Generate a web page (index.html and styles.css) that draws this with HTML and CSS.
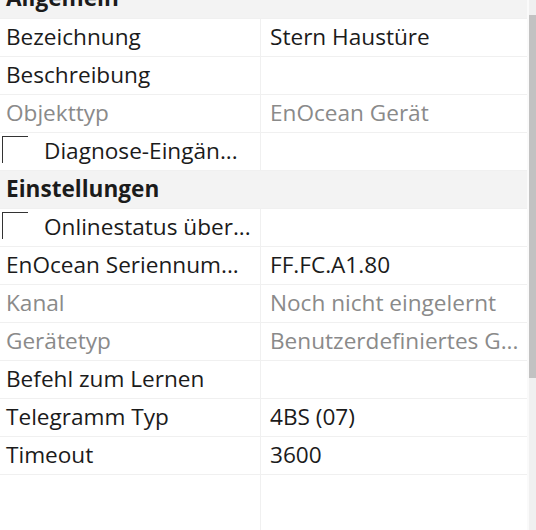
FILE: index.html
```html
<!DOCTYPE html>
<html lang="de">
<head>
<meta charset="utf-8">
<link rel="stylesheet" href="styles.css">
</head>
<body>
<div class="pane">
  <div class="grid">
    <div class="row cat first"><span class="cat-text">Allgemein</span></div>
    <div class="row"><div class="k">Bezeichnung</div><div class="v">Stern Haustüre</div></div>
    <div class="row"><div class="k">Beschreibung</div><div class="v"></div></div>
    <div class="row ro"><div class="k">Objekttyp</div><div class="v">EnOcean Gerät</div></div>
    <div class="row"><div class="k chk"><span class="box"></span><span>Diagnose-Eingän...</span></div><div class="v"></div></div>
    <div class="row cat"><span class="cat-text">Einstellungen</span></div>
    <div class="row"><div class="k chk"><span class="box"></span><span>Onlinestatus über...</span></div><div class="v"></div></div>
    <div class="row"><div class="k">EnOcean Seriennum...</div><div class="v">FF.FC.A1.80</div></div>
    <div class="row ro"><div class="k">Kanal</div><div class="v">Noch nicht eingelernt</div></div>
    <div class="row ro"><div class="k">Gerätetyp</div><div class="v">Benutzerdefiniertes G...</div></div>
    <div class="row"><div class="k">Befehl zum Lernen</div><div class="v"></div></div>
    <div class="row"><div class="k">Telegramm Typ</div><div class="v">4BS (07)</div></div>
    <div class="row"><div class="k">Timeout</div><div class="v">3600</div></div>
    <div class="filler"><div class="filler-k"></div></div>
  </div>
  <div class="scrollbar"><div class="thumb"></div></div>
</div>
</body>
</html>
```

FILE: styles.css
```css
html, body {
  margin: 0;
  padding: 0;
  background: #ffffff;
}
body {
  width: 536px;
  height: 530px;
  overflow: hidden;
  font-family: "Open Sans", "Noto Sans", sans-serif;
  font-size: 22.6px;
  color: #1b1b1b;
}
.pane {
  display: flex;
  height: 530px;
}
.grid {
  width: 527px;
  display: flex;
  flex-direction: column;
}
.row {
  height: 37px;
  flex: none;
  display: flex;
  border-bottom: 1px solid #f0f0f0;
}
.k {
  border-right: 1px solid #f0f0f0;
  padding-left: 6px;
  box-sizing: border-box;
  width: 261px;
  display: flex;
  align-items: center;
  white-space: nowrap;
  overflow: hidden;
  padding-bottom: 2px;
}
.v {
  flex: 1;
  padding-left: 9px;
  display: flex;
  align-items: center;
  white-space: nowrap;
  overflow: hidden;
  padding-bottom: 2px;
}
.ro .k, .ro .v {
  color: #8a8a8a;
}
.cat {
  background: #f3f3f3;
  align-items: center;
  padding-left: 6px;
  font-weight: bold;
}
.cat-text {
  padding-bottom: 2px;
}
.first {
  height: 18px;
  align-items: flex-end;
  overflow: hidden;
}
.first .cat-text {
  margin-bottom: 3px;
}
.chk {
  padding-left: 2px;
  align-items: flex-start;
}
.box {
  width: 26px;
  height: 27px;
  border-top: 1px solid #333333;
  border-left: 1px solid #333333;
  box-sizing: border-box;
  margin-top: 3px;
  flex: none;
}
.chk span + span {
  margin-left: 16px;
  align-self: center;
}
.filler {
  flex: 1;
  display: flex;
}
.filler-k {
  width: 261px;
  box-sizing: border-box;
  border-right: 1px solid #f0f0f0;
}
.scrollbar {
  width: 9px;
  background: #f0f0f0;
  border-left: 2px solid #fafafa;
  box-sizing: border-box;
}
.thumb {
  margin-top: 15px;
  height: 363px;
  background: #c2c2c2;
}
```
